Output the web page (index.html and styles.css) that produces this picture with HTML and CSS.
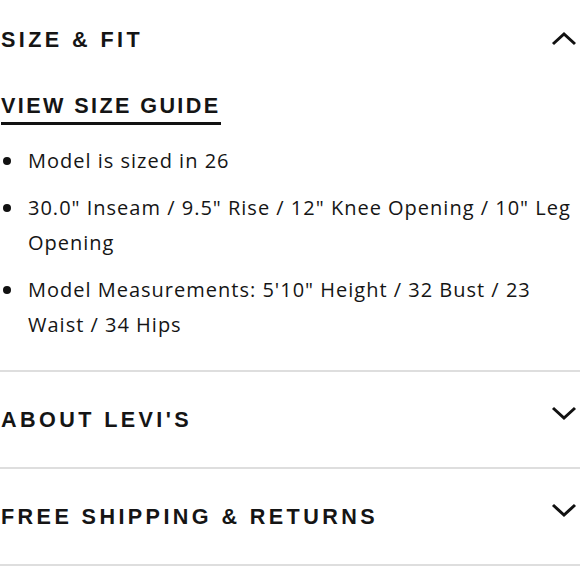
FILE: index.html
```html
<!DOCTYPE html>
<html>
<head>
<meta charset="utf-8">
<link rel="stylesheet" href="styles.css">
</head>
<body>
<div class="accordion">
  <section class="panel open">
    <div class="panel-head">
      <h2 class="title">SIZE &amp; FIT</h2>
      <svg class="chev" width="26" height="15" viewBox="0 0 26 15"><polyline points="2,13 13,3 24,13" fill="none" stroke="#111" stroke-width="3"/></svg>
    </div>
    <a class="guide">VIEW SIZE GUIDE</a>
    <ul class="facts">
      <li>Model is sized in 26</li>
      <li>30.0" Inseam / 9.5" Rise / 12" Knee Opening / 10" Leg Opening</li>
      <li>Model Measurements: 5'10" Height / 32 Bust / 23 Waist / 34 Hips</li>
    </ul>
  </section>
  <section class="panel">
    <div class="panel-head">
      <h2 class="title">ABOUT LEVI'S</h2>
      <svg class="chev down" width="26" height="15" viewBox="0 0 26 15"><polyline points="2,2 13,12 24,2" fill="none" stroke="#111" stroke-width="3"/></svg>
    </div>
  </section>
  <section class="panel">
    <div class="panel-head">
      <h2 class="title">FREE SHIPPING &amp; RETURNS</h2>
      <svg class="chev down" width="26" height="15" viewBox="0 0 26 15"><polyline points="2,2 13,12 24,2" fill="none" stroke="#111" stroke-width="3"/></svg>
    </div>
  </section>
</div>
</body>
</html>
```
FILE: styles.css
```css
html, body {
  margin: 0;
  padding: 0;
  background: #fff;
}
body {
  font-family: "Open Sans", sans-serif;
  color: #151515;
}
.accordion {
  width: 580px;
}
.panel {
  border-bottom: 2px solid #dedede;
}
.panel-head {
  display: flex;
  align-items: center;
  justify-content: space-between;
  height: 95px;
  padding: 0 3px 0 1px;
}
.open .panel-head {
  height: 80px;
}
.title {
  margin: 0;
  font-family: "Liberation Sans", Arial, sans-serif;
  font-weight: bold;
  font-size: 21.6px;
  letter-spacing: 3.4px;
}
.chev {
  display: block;
  margin-top: -4px;
}
.chev.down {
  margin-top: -12px;
}
.guide {
  display: inline-block;
  margin: 14px 0 0 1px;
  font-family: "Liberation Sans", Arial, sans-serif;
  font-weight: bold;
  font-size: 21.6px;
  letter-spacing: 2.4px;
  line-height: 24px;
  padding-bottom: 4px;
  border-bottom: 3px solid #111;
}
.facts {
  list-style: none;
  margin: 18px 0 0;
  padding: 0 0 16px;
}
.facts li {
  position: relative;
  padding-left: 28px;
  font-size: 20px;
  letter-spacing: 1px;
  line-height: 35px;
  margin-bottom: 12px;
}
.facts li::before {
  content: "";
  position: absolute;
  left: 3px;
  top: 14px;
  width: 8px;
  height: 8px;
  border-radius: 50%;
  background: #111;
}
```
